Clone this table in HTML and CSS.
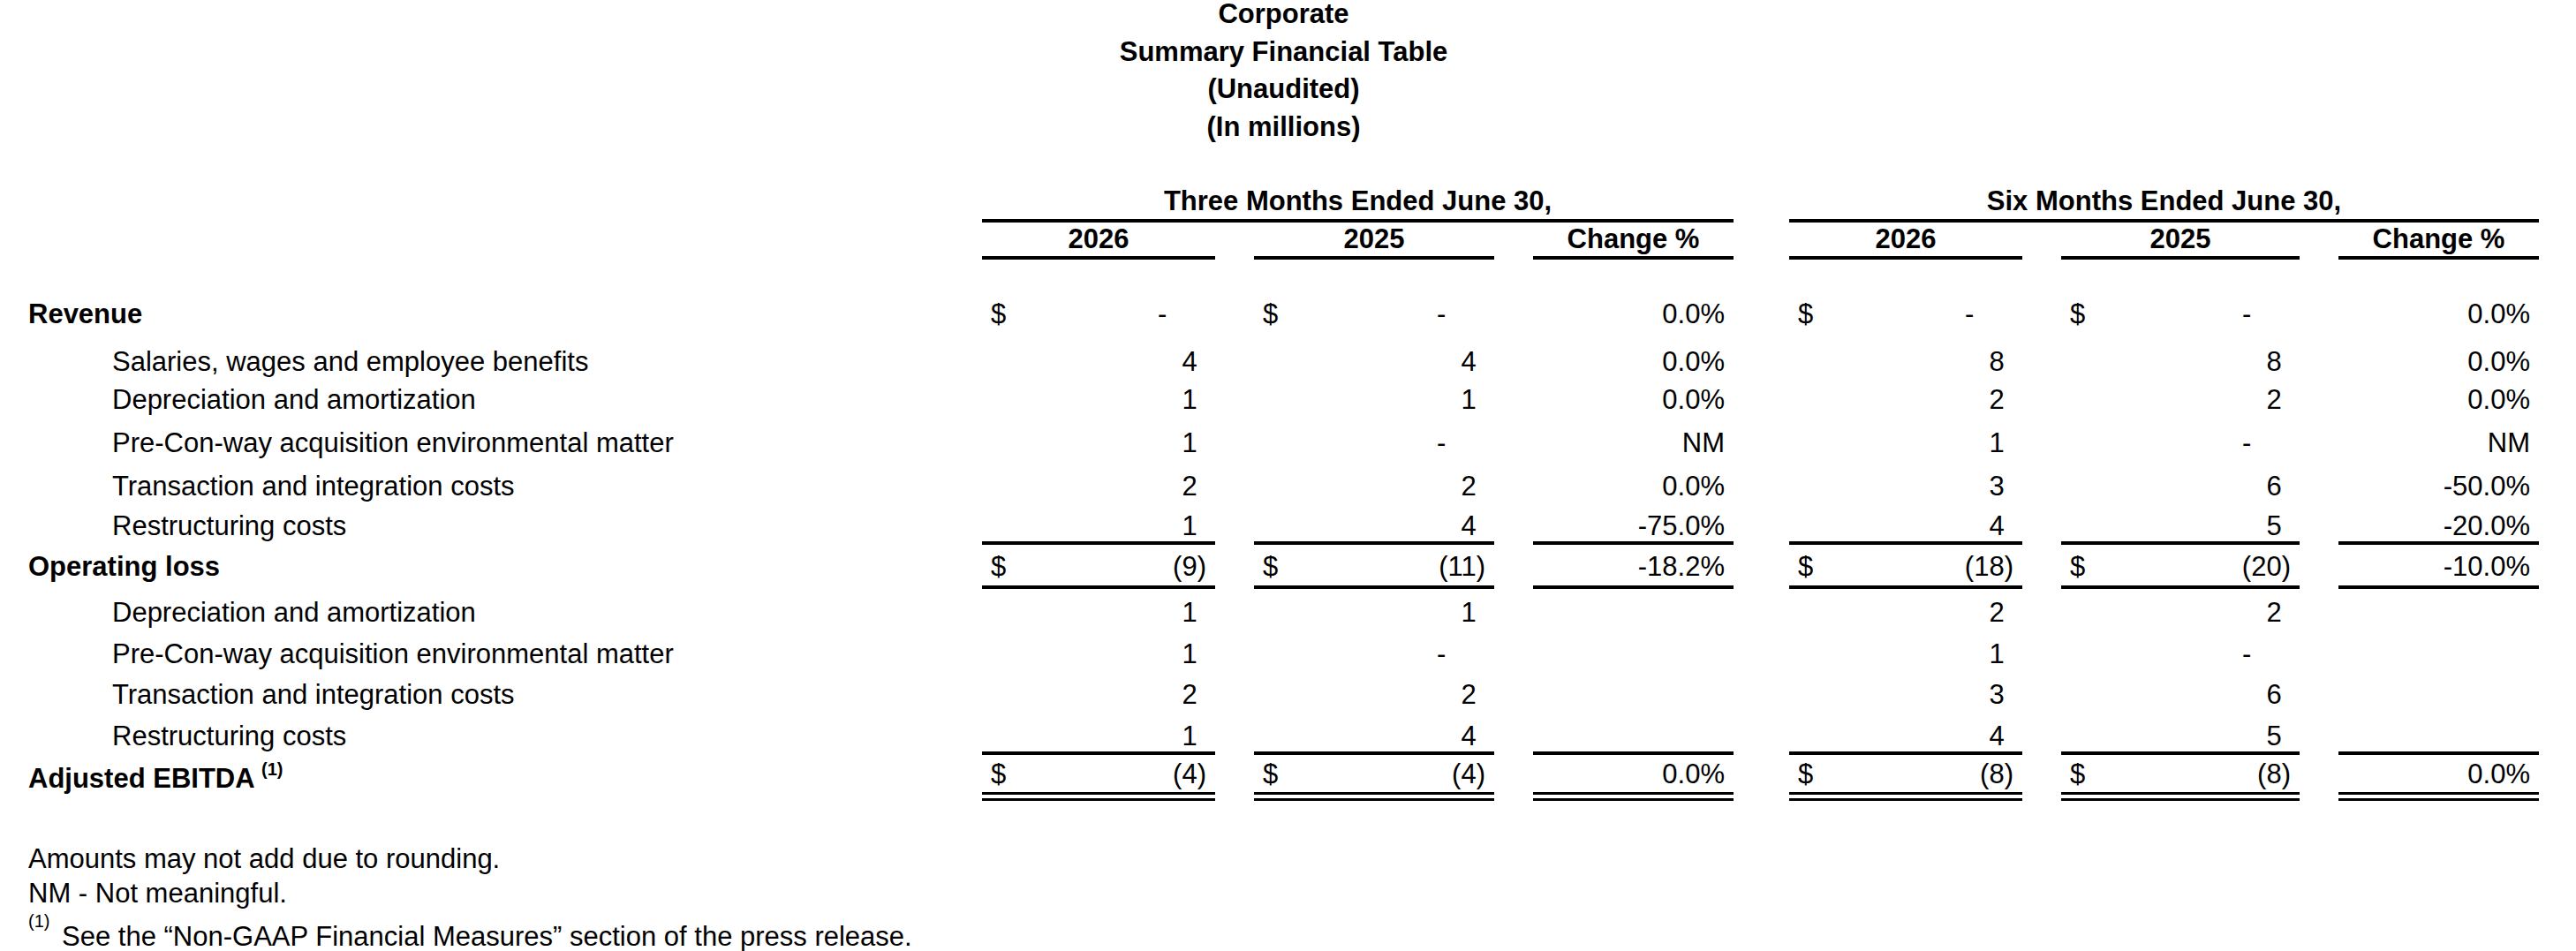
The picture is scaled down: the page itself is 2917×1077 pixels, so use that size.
FILE: index.html
```html
<!DOCTYPE html>
<html lang="en">
<head>
<meta charset="utf-8">
<title>Corporate Summary Financial Table</title>
<link rel="stylesheet" href="styles.css">
</head>
<body>
<div class="report">
  <div class="title">
    <div>Corporate</div>
    <div>Summary Financial Table</div>
    <div>(Unaudited)</div>
    <div>(In millions)</div>
  </div>

  <div class="row row--period">
    <div></div>
    <div class="period period--q">Three Months Ended June 30,</div>
    <div class="period period--h">Six Months Ended June 30,</div>
  </div>

  <div class="row row--years row--rule">
    <div></div>
    <div>2026</div><div>2025</div><div>Change %</div>
    <div>2026</div><div>2025</div><div>Change %</div>
  </div>

  <div class="row row--rev">
    <div class="label label--bold">Revenue</div>
    <div class="v"><span>$</span><span class="n z">-</span></div>
    <div class="v"><span>$</span><span class="n z">-</span></div>
    <div class="pct">0.0%</div>
    <div class="v"><span>$</span><span class="n z">-</span></div>
    <div class="v"><span>$</span><span class="n z">-</span></div>
    <div class="pct">0.0%</div>
  </div>

  <div class="row row--sal">
    <div class="label label--indent">Salaries, wages and employee benefits</div>
    <div class="v"><span class="n p">4</span></div>
    <div class="v"><span class="n p">4</span></div>
    <div class="pct">0.0%</div>
    <div class="v"><span class="n p">8</span></div>
    <div class="v"><span class="n p">8</span></div>
    <div class="pct">0.0%</div>
  </div>

  <div class="row row--dep">
    <div class="label label--indent">Depreciation and amortization</div>
    <div class="v"><span class="n p">1</span></div>
    <div class="v"><span class="n p">1</span></div>
    <div class="pct">0.0%</div>
    <div class="v"><span class="n p">2</span></div>
    <div class="v"><span class="n p">2</span></div>
    <div class="pct">0.0%</div>
  </div>

  <div class="row row--pre">
    <div class="label label--indent">Pre-Con-way acquisition environmental matter</div>
    <div class="v"><span class="n p">1</span></div>
    <div class="v"><span class="n z">-</span></div>
    <div class="pct">NM</div>
    <div class="v"><span class="n p">1</span></div>
    <div class="v"><span class="n z">-</span></div>
    <div class="pct">NM</div>
  </div>

  <div class="row row--trans">
    <div class="label label--indent">Transaction and integration costs</div>
    <div class="v"><span class="n p">2</span></div>
    <div class="v"><span class="n p">2</span></div>
    <div class="pct">0.0%</div>
    <div class="v"><span class="n p">3</span></div>
    <div class="v"><span class="n p">6</span></div>
    <div class="pct">-50.0%</div>
  </div>

  <div class="row row--restr row--rule">
    <div class="label label--indent">Restructuring costs</div>
    <div class="v"><span class="n p">1</span></div>
    <div class="v"><span class="n p">4</span></div>
    <div class="pct">-75.0%</div>
    <div class="v"><span class="n p">4</span></div>
    <div class="v"><span class="n p">5</span></div>
    <div class="pct">-20.0%</div>
  </div>

  <div class="row row--oploss row--rule">
    <div class="label label--bold">Operating loss</div>
    <div class="v"><span>$</span><span class="n">(9)</span></div>
    <div class="v"><span>$</span><span class="n">(11)</span></div>
    <div class="pct">-18.2%</div>
    <div class="v"><span>$</span><span class="n">(18)</span></div>
    <div class="v"><span>$</span><span class="n">(20)</span></div>
    <div class="pct">-10.0%</div>
  </div>

  <div class="row row--dep2">
    <div class="label label--indent">Depreciation and amortization</div>
    <div class="v"><span class="n p">1</span></div>
    <div class="v"><span class="n p">1</span></div>
    <div class="pct"></div>
    <div class="v"><span class="n p">2</span></div>
    <div class="v"><span class="n p">2</span></div>
    <div class="pct"></div>
  </div>

  <div class="row row--pre2">
    <div class="label label--indent">Pre-Con-way acquisition environmental matter</div>
    <div class="v"><span class="n p">1</span></div>
    <div class="v"><span class="n z">-</span></div>
    <div class="pct"></div>
    <div class="v"><span class="n p">1</span></div>
    <div class="v"><span class="n z">-</span></div>
    <div class="pct"></div>
  </div>

  <div class="row row--trans2">
    <div class="label label--indent">Transaction and integration costs</div>
    <div class="v"><span class="n p">2</span></div>
    <div class="v"><span class="n p">2</span></div>
    <div class="pct"></div>
    <div class="v"><span class="n p">3</span></div>
    <div class="v"><span class="n p">6</span></div>
    <div class="pct"></div>
  </div>

  <div class="row row--restr2 row--rule">
    <div class="label label--indent">Restructuring costs</div>
    <div class="v"><span class="n p">1</span></div>
    <div class="v"><span class="n p">4</span></div>
    <div class="pct"></div>
    <div class="v"><span class="n p">4</span></div>
    <div class="v"><span class="n p">5</span></div>
    <div class="pct"></div>
  </div>

  <div class="row row--adj row--double">
    <div class="label label--bold label--noted">Adjusted EBITDA <sup class="ref">(1)</sup></div>
    <div class="v"><span>$</span><span class="n">(4)</span></div>
    <div class="v"><span>$</span><span class="n">(4)</span></div>
    <div class="pct">0.0%</div>
    <div class="v"><span>$</span><span class="n">(8)</span></div>
    <div class="v"><span>$</span><span class="n">(8)</span></div>
    <div class="pct">0.0%</div>
  </div>

  <div class="notes">
    <p>Amounts may not add due to rounding.</p>
    <p>NM - Not meaningful.</p>
    <p class="note-ref"><sup class="ref ref--note">(1)</sup> See the “Non-GAAP Financial Measures” section of the press release.</p>
  </div>
</div>
</body>
</html>
```

FILE: styles.css
```css
html, body {
  margin: 0;
  padding: 0;
  background: #fff;
}

body {
  font-family: "Liberation Sans", Arial, sans-serif;
  font-size: 31px;
  color: #000;
  overflow: hidden;
}

.report {
  margin-left: 32px;
  width: 2843px;
}

.title {
  margin-top: -5px;
  text-align: center;
  font-weight: bold;
  line-height: 42.5px;
}

.row {
  display: grid;
  grid-template-columns: 1080px 264px 316px 271px 327px 314px 271px;
  line-height: 34px;
  white-space: nowrap;
}

.row > * {
  padding-top: var(--pt, 12px);
  padding-bottom: var(--pb, 0px);
}

/* gaps between the value columns */
.row > :nth-child(3),
.row > :nth-child(4),
.row > :nth-child(6),
.row > :nth-child(7) {
  margin-left: 44px;
}

.row > :nth-child(5) {
  margin-left: 63px;
}

/* period header */
.row--period {
  --pt: 46px;
  --pb: 3px;
  font-weight: bold;
  text-align: center;
}

.row--period > .period {
  border-bottom: 4px solid #000;
}

.row--period > .period--q {
  grid-column: 2 / span 3;
  margin-left: 0;
}

.row--period > .period--h {
  grid-column: 5 / span 3;
  margin-left: 63px;
}

.row--years {
  --pt: 2px;
  --pb: 2px;
  font-weight: bold;
  text-align: center;
}

/* rules */
.row--rule > :not(:first-child) {
  border-bottom: 4px solid #000;
}

.row--double > :not(:first-child) {
  border-bottom: 10px double #000;
}

/* per-row vertical spacing */
.row--rev    { --pt: 45px; }
.row--sal    { --pt: 20px; }
.row--dep    { --pt: 9px; }
.row--pre    { --pt: 15px; }
.row--trans  { --pt: 15px; }
.row--restr  { --pt: 11px; }
.row--oploss { --pt: 8px; --pb: 4px; }
.row--dep2   { --pt: 10px; }
.row--pre2   { --pt: 13px; }
.row--trans2 { --pt: 12px; }
.row--restr2 { --pt: 13px; }
.row--adj    { --pt: 5px; --pb: 3px; }

/* labels */
.label--bold {
  font-weight: bold;
}

.label--indent {
  padding-left: 95px;
}

.row > .label--noted {
  padding-top: 10px;
}

/* values */
.v {
  display: flex;
  padding-left: 10px;
  padding-right: 10px;
}

.v .n {
  margin-left: auto;
}

.v .n.p {
  padding-right: 0.333em;
}

.v .n.z {
  padding-right: 1.445em;
}

.pct {
  text-align: right;
  padding-right: 10px;
}

/* footnote references */
.ref {
  font-size: 20px;
  line-height: 0;
  vertical-align: 14px;
}

.ref--note {
  vertical-align: 21px;
  margin-right: 5px;
}

.notes {
  margin-top: 46px;
  line-height: 39px;
}

.notes p {
  margin: 0;
}

.notes .note-ref {
  margin-top: 10px;
}
```
